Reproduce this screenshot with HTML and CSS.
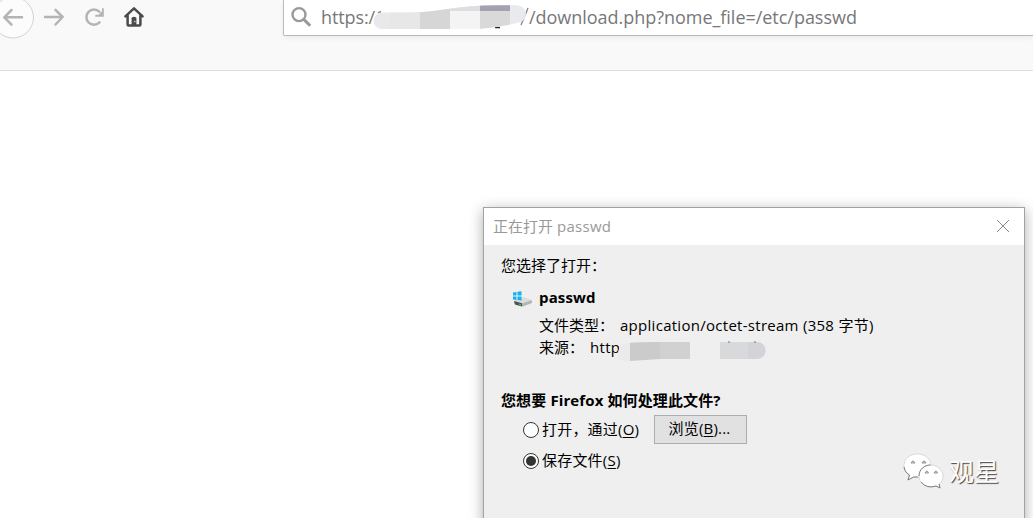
FILE: index.html
```html
<!DOCTYPE html>
<html lang="zh-CN">
<head>
<meta charset="utf-8">
<title>passwd</title>
<link rel="stylesheet" href="styles.css">
</head>
<body>
<header class="toolbar">
  <nav class="nav">
    <svg width="160" height="44" viewBox="0 0 160 44" fill="none" stroke-linecap="round" stroke-linejoin="round">
      <circle cx="13" cy="17.5" r="20.5" fill="#fcfcfc" stroke="#d2d2d2"/>
      <g stroke="#b4b4b4" stroke-width="2.5">
        <path d="M22 17.3H4.5M11.5 10L4.3 17.3L11.5 24.7"/>
        <path d="M45 17H62.5M55.5 9.8L62.7 17L55.5 24.5"/>
        <path d="M99.5 22.3A7.6 7.6 0 1 1 99.3 11.6"/>
      </g>
      <path d="M103.8 8.2V16.8H95.3V14.8H98.5L102 11.3V8.2Z" fill="#b4b4b4"/>
      <path d="M125.4 16.3L134 8.3L142.6 16.3M127.6 15.5V24.6Q127.6 25.6 128.6 25.6H139.4Q140.4 25.6 140.4 24.6V15.5" stroke="#4b4b4d" stroke-width="2.5"/>
      <path d="M131.6 26V18.3Q131.6 16.8 134 16.8Q136.4 16.8 136.4 18.3V26Z" fill="#4b4b4d"/>
      <circle cx="134.8" cy="21.5" r=".8" fill="#ddd"/>
    </svg>
  </nav>
  <div class="address">
    <svg class="search" width="22" height="22" viewBox="0 0 22 22" fill="none" stroke="#999">
      <circle cx="8" cy="8.6" r="6.5" stroke-width="2.4"/>
      <path d="M12.8 13.4L19.2 19.7" stroke-width="3"/>
    </svg>
    <span class="scheme">https:/</span>
    <svg class="mask" width="158" height="27" viewBox="0 0 158 27">
      <defs><clipPath id="urlMask"><path d="M10 9.5H44Q56 9 66 7.5Q92 3.5 112 2.5Q128 2 146 2.5A8.5 8.5 0 0 1 149 19Q130 24 108 26H10A8.3 8.3 0 0 1 10 9.500Z"/></clipPath></defs>
      <path d="M7 10L10 8.5M150 22L157 5" stroke="#88888c" stroke-width="1.4"/>
      <path d="M124 24.5H129" stroke="#222" stroke-width="1.5"/>
      <g clip-path="url(#urlMask)">
        <rect width="158" height="27" fill="#e9e9eb"/>
        <rect x="19" width="30" height="27" fill="#e7e7e7"/>
        <rect x="49" width="30" height="27" fill="#d6d6d7"/>
        <rect x="79" y="8" width="30" height="19" fill="#f4f4f4"/>
        <rect x="79" width="30" height="8" fill="#dddde2"/>
        <rect x="109" width="30" height="8" fill="#a3a2af"/>
        <rect x="109" y="8" width="30" height="19" fill="#d9d9da"/>
        <rect x="139" width="19" height="27" fill="#e9eaed"/>
      </g>
    </svg>
    <span class="path">/download.php?nome_file=/etc/passwd</span>
  </div>
</header>

<section class="dialog">
  <div class="titlebar">
    <span class="title">正在打开 <span class="title-en">passwd</span></span>
    <svg width="14" height="14" viewBox="0 0 14 14" stroke="#8c8c8c" stroke-width="1"><path d="M1 1L13 13M13 1L1 13"/></svg>
  </div>
  <div class="content">
    <p class="intro">您选择了打开：</p>
    <div class="file">
      <svg class="drive" width="20" height="17" viewBox="0 0 20 17">
        <path d="M1 10.5L10 7L19 9.5V12L10 15.5L2 13.5Z" fill="#b4b4b4"/>
        <path d="M1 10L10 6L19 9L9 12.5Z" fill="#dcdcdc"/>
        <path d="M1 10L9 12.3V15.5L2 13.5Z" fill="#4e5550"/>
        <path d="M6 12.5L8 13.2V14.5L6 13.8Z" fill="#27e33f"/>
        <path d="M0 1.5L3.5 1V4.5H0ZM4.5 .8L8.5 .3V4.5H4.5ZM0 5.5H3.5V9L0 8.5ZM4.5 5.5H8.5V9.5L4.5 9Z" fill="#12b4ef"/>
      </svg>
      <strong class="filename">passwd</strong>
    </div>
    <div class="row type"><span class="label">文件类型：</span><span class="mime">application/octet-stream (358 字节)</span></div>
    <div class="row source">
      <span class="label">来源：</span><span class="http">http</span>
      <svg class="source-mask" width="152" height="22" viewBox="0 0 152 22">
        <path d="M4 5Q10 1 20 1V19Q10 21 5 20Q-1 17 4 5Z" fill="#ebebeb"/>
        <path d="M14 2Q24 1 44 1V18L14 20Z" fill="#cbcbcb"/>
        <rect x="44" y="1" width="30" height="17" fill="#d1d1d1"/>
        <path d="M104 1H141A8.5 8.5 0 0 1 141 18H104Z" fill="#d8d9da"/>
        <path d="M132 1H141A8.5 8.5 0 0 1 141 18H132Z" fill="#d3d4d7"/>
        <path d="M112 1H114M138 1H140" stroke="#777"/>
      </svg>
    </div>
    <p class="question">您想要 Firefox 如何处理此文件?</p>
    <div class="option open"><i class="radio"></i><span class="option-label">打开，通过(<u>O</u>)</span><button class="browse">浏览(<u>B</u>)...</button></div>
    <div class="option save"><i class="radio checked"></i><span class="option-label">保存文件(<u>S</u>)</span></div>
  </div>
  <div class="watermark">
    <svg width="42" height="36" viewBox="0 0 42 36" fill="#fff" stroke="#c4c4c4" stroke-width=".6">
      <path d="M14.5 1C6.5 1 1 6 1 12.5C1 17 3 20 6.5 22L5 27L10.5 24Q22 26 26.5 18C31 9 24 1 14.5 1Z"/>
      <path d="M27.5 12C20.5 12 16 17 16 23C16 29 21 34 27.5 34Q31 34 33 33L37 35L36 31C39 29 40 26 40 23C40 17 34.5 12 27.5 12Z"/>
      <path d="M1 14C2 18 3 20 6.5 22L5 27L10.5 24H15M16 23C16 16 22 12 27.5 12M18 29Q24 36 33 33L37 35L36 31" fill="none" stroke="#666" stroke-width=".8"/>
      <path d="M8 10Q10 6 12 10ZM19 10Q21 6 23 10ZM22 20Q24 16 25.5 20ZM31 20Q33 16 34.5 20Z" fill="#ddd" stroke="#888" stroke-width=".9"/>
    </svg>
    <span>观星</span>
  </div>
</section>
</body>
</html>
```
FILE: styles.css
```css
* { box-sizing: border-box; }
body {
  margin: 0;
  height: 518px;
  overflow: hidden;
  background: #fff;
  color: #000;
  font-family: "Open Sans", "Noto Sans CJK SC", sans-serif;
}
p { margin: 0; }
.toolbar {
  display: flex;
  height: 71px;
  background: #f9f9f9;
  border-bottom: 1px solid #dedede;
}
.nav { width: 283px; }
.nav svg { display: block; }
.address {
  display: flex;
  flex: 1;
  height: 36px;
  background: #fff;
  border: solid #bababa;
  border-width: 0 0 1px 1px;
  border-radius: 0 0 0 2px;
  box-shadow: 0 2px 5px rgba(0, 0, 0, .06);
  color: #77777a;
  font-size: 18px;
  line-height: 35px;
  white-space: nowrap;
}
.search { margin: 6px 0 0 7px; }
.scheme { width: 52px; margin-left: 8px; letter-spacing: -.1px; }
.mask { margin-top: 3px; margin-left: -2px; }
.path { letter-spacing: -.03px; }
.dialog {
  position: absolute;
  left: 483px;
  top: 207px;
  width: 542px;
  height: 330px;
  background: #efefef;
  border: 1px solid #a2a2a2;
  box-shadow: 0 3px 13px rgba(0, 0, 0, .32);
  font-size: 15px;
  line-height: 22px;
  white-space: nowrap;
}
.titlebar {
  display: flex;
  justify-content: space-between;
  align-items: center;
  height: 37px;
  padding: 0 14px 1px 9px;
  background: #fff;
  color: #999;
}
.title { padding-bottom: 1px; }
.title-en { letter-spacing: .3px; }
.content { padding: 9px 18px 0 17px; }
.file {
  display: flex;
  height: 22px;
  margin-top: 10px;
  padding-left: 12px;
}
.drive { margin-top: 5px; }
.filename { margin-left: 6px; letter-spacing: .15px; }
.row { display: flex; padding-left: 38px; }
.type { margin-top: 6px; }
.type .label { width: 81px; }
.mime { letter-spacing: .28px; }
.source .label { width: 51px; }
.http { width: 29px; overflow: hidden; letter-spacing: .3px; }
.source-mask { margin: 5px 0 0 -3px; }
.question { margin-top: 26px; font-weight: 700; letter-spacing: .12px; }
.option {
  display: flex;
  align-items: center;
  padding-left: 22px;
}
.open { height: 29px; margin-top: 4px; }
.save { height: 22px; margin-top: 6px; }
.radio {
  display: grid;
  place-items: center;
  width: 16px;
  height: 16px;
  background: #fff;
  border: 1px solid #333;
  border-radius: 50%;
}
.checked::before {
  content: "";
  width: 10px;
  height: 10px;
  border-radius: 50%;
  background: #333;
}
.option-label { margin-left: 3px; padding-bottom: 2px; letter-spacing: .2px; }
.open .option-label { width: 112px; }
u { text-decoration-thickness: 1px; text-underline-offset: 2px; }
.browse {
  width: 93px;
  height: 29px;
  padding: 0 2px 3px 0;
  background: #e1e1e1;
  border: 1px solid #adadad;
  border-radius: 0;
  font: inherit;
  color: inherit;
  letter-spacing: .2px;
}
.watermark {
  position: absolute;
  left: 419px;
  top: 245px;
  display: flex;
  gap: 4px;
  align-items: center;
  color: #fff;
  font-size: 25px;
  line-height: 36px;
  text-shadow: 1px 1px 1px #444;
}
```
